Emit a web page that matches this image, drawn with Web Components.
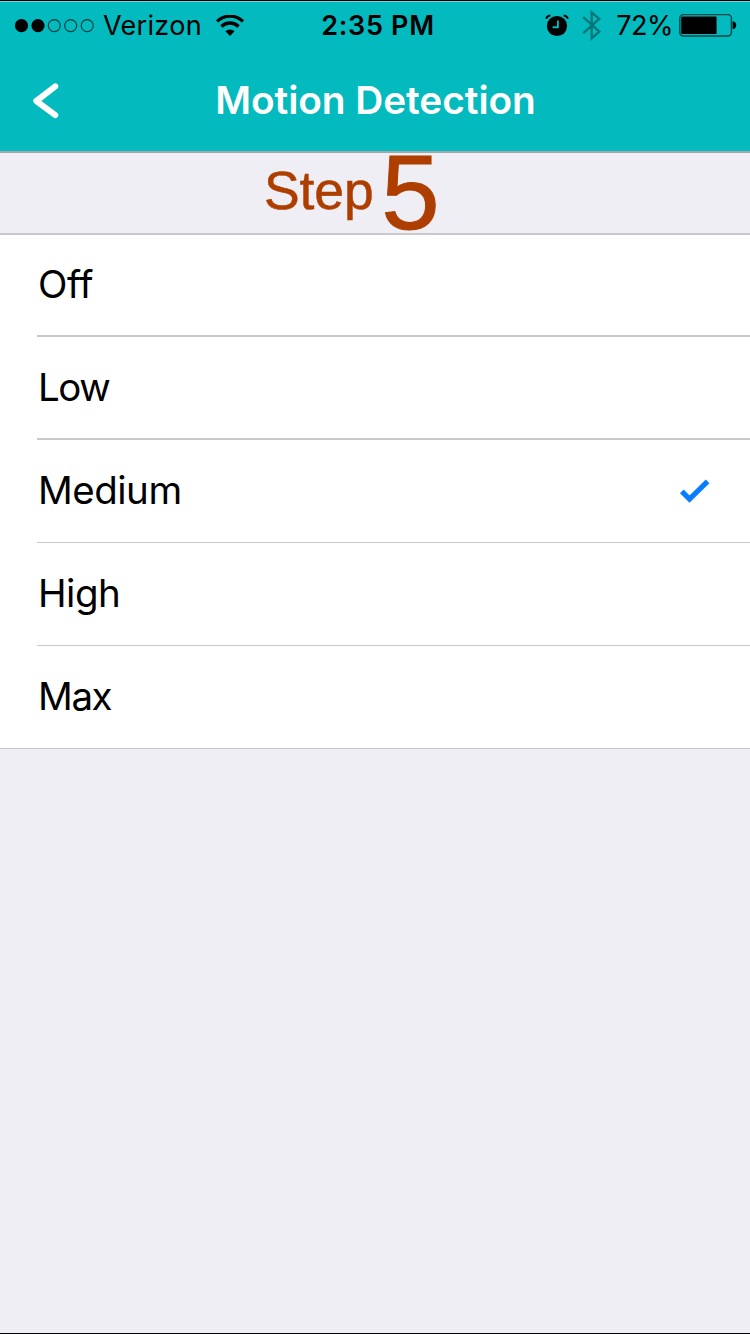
<!DOCTYPE html>
<html lang="en">
<head>
<meta charset="utf-8">
<title>Motion Detection</title>
<style>
  html, body { margin: 0; }
  body { width: 750px; height: 1334px; overflow: hidden; background: #efeef4; font-family: Inter, "Liberation Sans", sans-serif; color: #000; }
</style>
</head>
<body>
<settings-screen></settings-screen>
<script>
  const define = (name, html) => customElements.define(name, class extends HTMLElement {
    constructor() {
      super();
      const t = document.createElement('template');
      t.innerHTML = html;
      this.attachShadow({ mode: 'open' }).appendChild(t.content.cloneNode(true));
    }
  });

  define('signal-dots', `
    <style>:host { display: block; width: 80px; height: 14px; } svg { display: block; }</style>
    <svg width="80" height="14" viewBox="0 0 80 14">
      <circle cx="6.5" cy="6.6" r="6.6"/><circle cx="23" cy="6.6" r="6.6"/>
      <g fill="none" stroke="#003a3b" stroke-width="1.1"><circle cx="39.3" cy="6.6" r="6"/><circle cx="55.7" cy="6.6" r="6"/><circle cx="72.2" cy="6.6" r="6"/></g>
    </svg>`);

  define('wifi-icon', `
    <style>:host { display: block; width: 30px; height: 22px; } svg { display: block; }</style>
    <svg width="30" height="22" viewBox="0 0 30 22">
      <g fill="none" stroke="#000" stroke-width="3.3">
        <path d="M2 6.4A18.6 18.6 0 0 1 28 6.4"/>
        <path d="M6.4 11.5A12.3 12.3 0 0 1 23.6 11.5"/>
      </g>
      <path d="M10.4 16.2A7 7 0 0 1 19.6 16.2L15 21Z"/>
    </svg>`);

  define('alarm-icon', `
    <style>:host { display: block; width: 24px; height: 24px; } svg { display: block; }</style>
    <svg width="24" height="24" viewBox="0 0 24 24">
      <circle cx="12" cy="12" r="10.1"/>
      <path d="M1.1 4.8Q2 2 5.3 1.5M18.7 1.5Q22 2 22.9 4.8" fill="none" stroke="#000" stroke-width="2"/>
      <path d="M12.9 6.4V13.2H7.6" fill="none" stroke="#03babe" stroke-width="1.9"/>
    </svg>`);

  define('bluetooth-icon', `
    <style>:host { display: block; width: 20px; height: 32px; } svg { display: block; }</style>
    <svg width="20" height="32" viewBox="0 0 20 32">
      <path d="M1.3 7.2L17.3 21.6L9.7 28.4V2.3L17.3 8.9L1.3 23.2" fill="none" stroke="#047678" stroke-width="2.3"/>
    </svg>`);

  define('battery-icon', `
    <style>:host { display: block; width: 58px; height: 24px; } svg { display: block; }</style>
    <svg width="58" height="24" viewBox="0 0 58 24">
      <rect x=".8" y=".6" width="51.6" height="21.4" rx="3.5" fill="none" stroke="#004546" stroke-width="1.4"/>
      <rect x="2.2" y="2.6" width="35.4" height="17.4" rx="1"/>
      <path d="M53.6 7.3Q57.2 7.8 57.2 11.3T53.6 15.3Z"/>
    </svg>`);

  define('status-bar', `
    <style>
      :host { display: grid; grid-template-columns: 1fr auto 1fr; align-items: center; height: 48px; padding: 0 13px 0 15px; font-size: 27px; line-height: 48px; white-space: nowrap; }
      div { display: flex; align-items: center; }
      .right { justify-content: flex-end; }
      .carrier { margin-left: 8px; letter-spacing: .3px; }
      wifi-icon { margin-left: 13px; }
      .time { font-weight: 600; letter-spacing: .7px; margin-left: 4px; }
      alarm-icon { margin-right: 13px; }
      bluetooth-icon { margin-right: 14px; }
      .pct { letter-spacing: -.5px; margin-right: 6px; }
    </style>
    <div><signal-dots></signal-dots><span class="carrier">Verizon</span><wifi-icon></wifi-icon></div>
    <span class="time">2:35 PM</span>
    <div class="right"><alarm-icon></alarm-icon><bluetooth-icon></bluetooth-icon><span class="pct">72%</span><battery-icon></battery-icon></div>`);

  define('nav-bar', `
    <style>
      :host { display: grid; grid-template-columns: 120px 1fr 120px; align-items: start; height: 101px; color: #fff; }
      svg { display: block; margin: 33px 0 0 32px; }
      h1 { margin: 0; font-size: 38.8px; line-height: 99px; font-weight: 600; text-align: center; white-space: nowrap; letter-spacing: -.05px; padding-left: 1px; }
    </style>
    <svg width="28" height="36" viewBox="0 0 28 36"><path d="M23.3 3.4L4.3 18L23.3 32.2" fill="none" stroke="#fff" stroke-width="6" stroke-linecap="round" stroke-linejoin="round"/></svg>
    <h1><slot></slot></h1>`);

  define('step-label', `
    <style>
      :host { display: flex; align-items: flex-start; height: 80px; padding-left: 264px; box-sizing: border-box; font-family: "Liberation Sans", Arial, sans-serif; color: #ad3e00; }
      span { -webkit-text-stroke: .5px #ad3e00; }
      .word { font-size: 53.5px; line-height: 76px; letter-spacing: -.1px; }
      .num { font-size: 105px; margin-left: 7.5px; line-height: 79px; -webkit-text-stroke-width: 1px; }
    </style>
    <span class="word"><slot></slot></span><span class="num"><slot name="number"></slot></span>`);

  define('option-row', `
    <style>
      :host { display: flex; box-sizing: border-box; height: var(--h, 103px); padding-left: 37px; background: #fff; }
      .cell { flex: 1; display: flex; justify-content: space-between; box-sizing: border-box; padding-right: 38px; border-bottom: var(--line, 1px) solid #c8c7cc; }
      :host([last]) { padding-left: 0; }
      :host([last]) .cell { padding-left: 37px; }
      .label { font-size: 38.5px; line-height: var(--lh, 100px); letter-spacing: var(--ls, -.5px); margin-left: 1px; }
      svg { display: none; margin-top: 37px; }
      :host([checked]) svg { display: block; }
    </style>
    <div class="cell"><span class="label"><slot></slot></span>
      <svg width="34" height="30" viewBox="0 0 34 30"><path d="M3.8 14.4L11.5 22.1L29.6 4.4" fill="none" stroke="#087dff" stroke-width="5.2"/></svg>
    </div>`);

  define('settings-screen', `
    <style>
      :host { display: flex; flex-direction: column; box-sizing: border-box; height: 1334px; border-top: 1px solid #000; border-bottom: 1px solid #000; }
      header { background: #03babe; border-top: 1px solid #7fd0d4; border-bottom: 2px solid #a0a8ad; height: 149px; }
      main { border-top: 2px solid #c8c7cc; }
    </style>
    <header><status-bar></status-bar><nav-bar>Motion Detection</nav-bar></header>
    <step-label>Step<span slot="number">5</span></step-label>
    <main>
      <option-row style="--h:102px;--line:2px;--lh:98px">Off</option-row>
      <option-row style="--line:2px;--ls:-1.4px">Low</option-row>
      <option-row checked>Medium</option-row>
      <option-row>High</option-row>
      <option-row last style="--ls:-1.4px">Max</option-row>
    </main>`);
</script>
</body>
</html>
